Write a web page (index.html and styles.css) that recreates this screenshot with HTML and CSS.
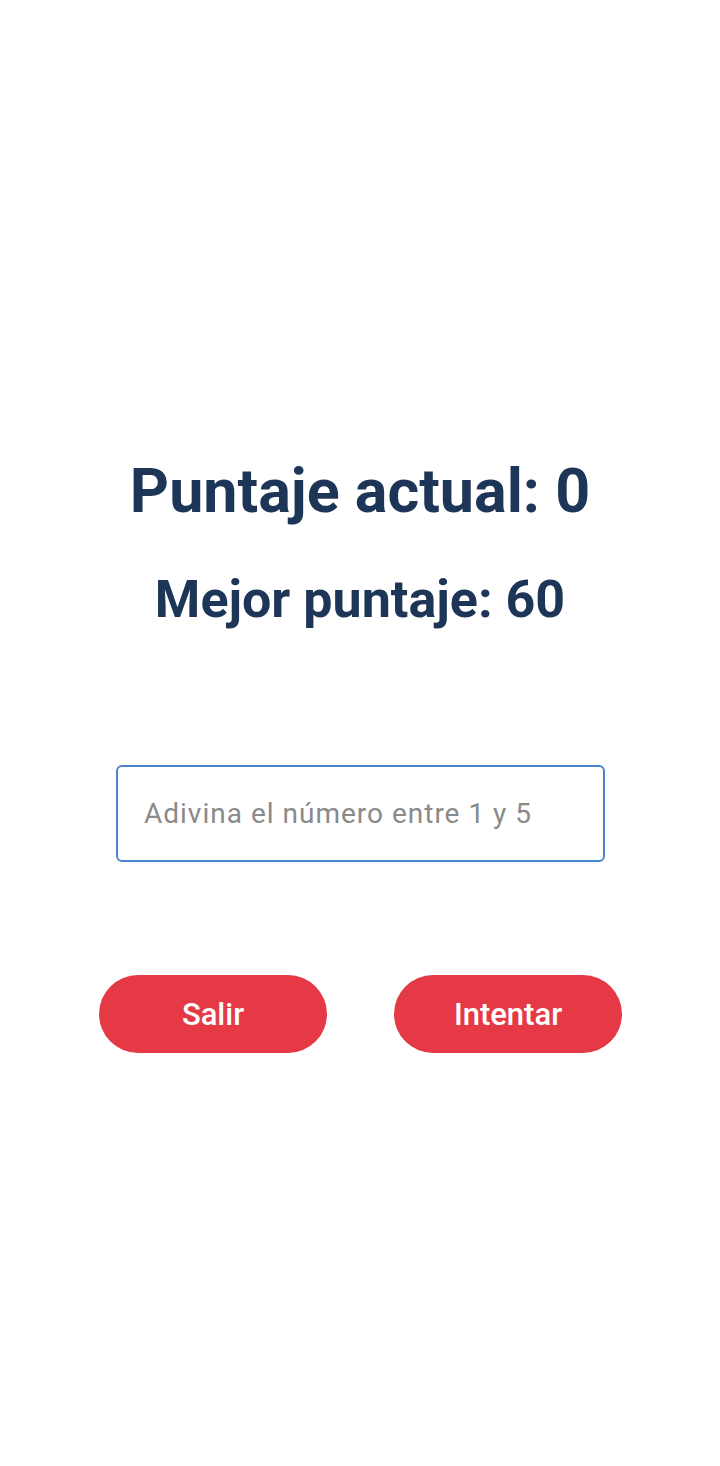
FILE: index.html
```html
<!DOCTYPE html>
<html lang="es">
<head>
<meta charset="utf-8">
<link rel="stylesheet" href="styles.css">
</head>
<body>
<main class="screen">
  <h1 class="score">Puntaje actual: 0</h1>
  <h2 class="best">Mejor puntaje: 60</h2>
  <input class="guess" type="text" placeholder="Adivina el número entre 1 y 5">
  <div class="actions">
    <button class="btn">Salir</button>
    <button class="btn">Intentar</button>
  </div>
</main>
</body>
</html>
```
FILE: styles.css
```css
html, body {
  margin: 0;
  padding: 0;
  background: #ffffff;
}
body {
  font-family: Roboto, "Noto Sans", sans-serif;
  width: 720px;
  height: 1466px;
}
.screen {
  display: flex;
  flex-direction: column;
  align-items: center;
  padding-top: 455px;
}
.score {
  margin: 0;
  font-size: 61px;
  font-weight: 700;
  line-height: 72px;
  color: #1d3557;
}
.best {
  margin: 42px 0 0;
  font-size: 52px;
  font-weight: 700;
  line-height: 62px;
  color: #1d3557;
}
.guess {
  margin-top: 134px;
  box-sizing: border-box;
  width: 489px;
  height: 97px;
  border: 2px solid #4a86d0;
  border-radius: 6px;
  padding: 0 26px;
  font-family: Roboto, "Noto Sans", sans-serif;
  font-size: 28px;
  letter-spacing: 1px;
  color: #333;
  outline: none;
  margin-left: 1px;
}
.guess::placeholder {
  color: #8a8a8a;
}
.actions {
  margin-top: 113px;
  display: flex;
  gap: 67px;
  margin-left: 1px;
}
.btn {
  width: 228px;
  height: 78px;
  border: none;
  border-radius: 39px;
  background: #e63946;
  color: #ffffff;
  font-family: Roboto, "Noto Sans", sans-serif;
  font-size: 31px;
  font-weight: 500;
  padding: 0;
}
```
